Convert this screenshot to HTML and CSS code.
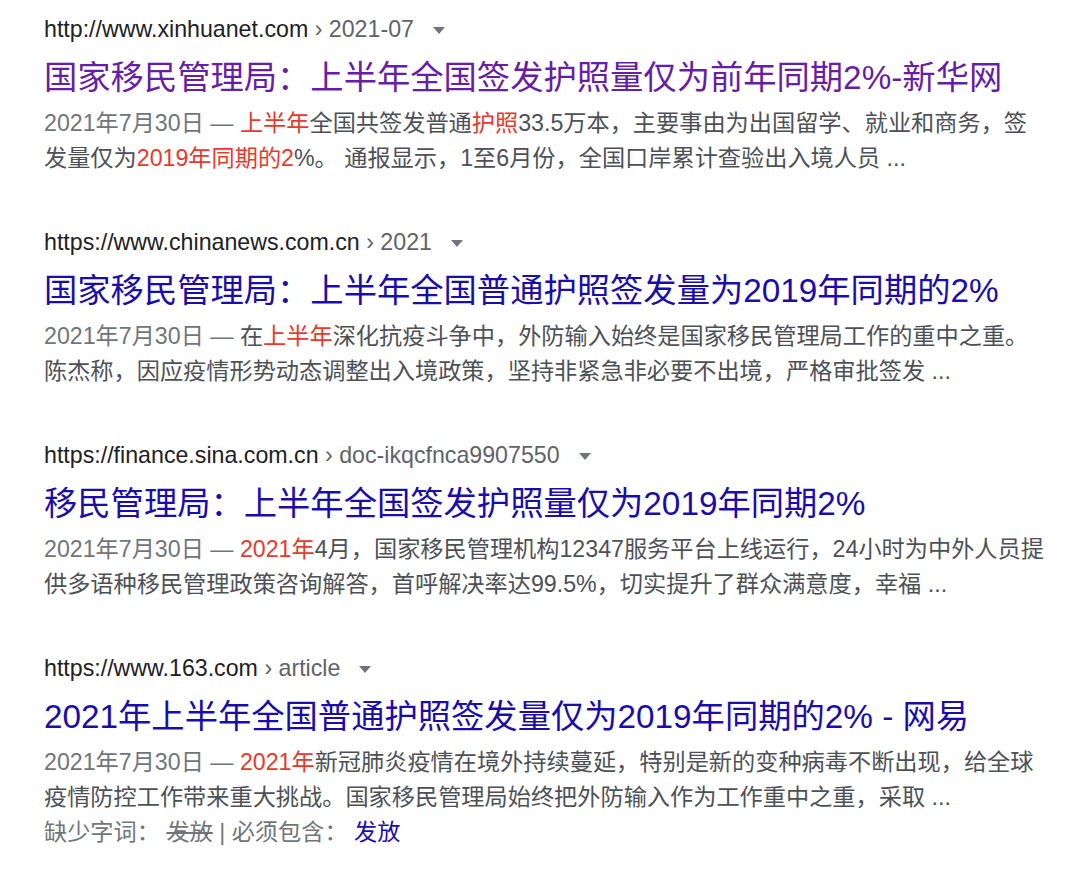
FILE: index.html
```html
<!DOCTYPE html>
<html lang="zh-CN">
<head>
<meta charset="utf-8">
<title>搜索结果</title>
<link rel="stylesheet" href="styles.css">
</head>
<body>
<main class="results">
  <div class="result">
    <div class="cite"><span class="host">http://www.xinhuanet.com</span><span class="crumb"> › 2021-07</span><span class="caret"></span></div>
    <a class="title visited" href="#">国家移民管理局：上半年全国签发护照量仅为前年同期2%-新华网</a>
    <div class="snippet"><span class="date">2021年7月30日 — </span><em>上半年</em>全国共签发普通<em>护照</em>33.5万本，主要事由为出国留学、就业和商务，签<br>发量仅为<em>2019年同期的2</em>%。 通报显示，1至6月份，全国口岸累计查验出入境人员 ...</div>
  </div>
  <div class="result">
    <div class="cite"><span class="host">https://www.chinanews.com.cn</span><span class="crumb"> › 2021</span><span class="caret"></span></div>
    <a class="title" href="#">国家移民管理局：上半年全国普通护照签发量为2019年同期的2%</a>
    <div class="snippet"><span class="date">2021年7月30日 — </span>在<em>上半年</em>深化抗疫斗争中，外防输入始终是国家移民管理局工作的重中之重。<br>陈杰称，因应疫情形势动态调整出入境政策，坚持非紧急非必要不出境，严格审批签发 ...</div>
  </div>
  <div class="result">
    <div class="cite"><span class="host">https://finance.sina.com.cn</span><span class="crumb"> › doc-ikqcfnca9907550</span><span class="caret"></span></div>
    <a class="title" href="#">移民管理局：上半年全国签发护照量仅为2019年同期2%</a>
    <div class="snippet"><span class="date">2021年7月30日 — </span><em>2021年</em>4月，国家移民管理机构12347服务平台上线运行，24小时为中外人员提<br>供多语种移民管理政策咨询解答，首呼解决率达99.5%，切实提升了群众满意度，幸福 ...</div>
  </div>
  <div class="result">
    <div class="cite"><span class="host">https://www.163.com</span><span class="crumb"> › article</span><span class="caret"></span></div>
    <a class="title" href="#">2021年上半年全国普通护照签发量仅为2019年同期的2% - 网易</a>
    <div class="snippet"><span class="date">2021年7月30日 — </span><em>2021年</em>新冠肺炎疫情在境外持续蔓延，特别是新的变种病毒不断出现，给全球<br>疫情防控工作带来重大挑战。国家移民管理局始终把外防输入作为工作重中之重，采取 ...</div>
    <div class="missing">缺少字词： <s>发放</s> | 必须包含： <a class="must" href="#">发放</a></div>
  </div>
</main>
</body>
</html>
```
FILE: styles.css
```css
html, body {
  margin: 0;
  padding: 0;
  background: #ffffff;
}
body {
  font-family: "Liberation Sans", "Noto Sans CJK SC", Arial, sans-serif;
  color: #4d5156;
}
.results {
  padding: 14px 0 0 44px;
}
.result {
  margin-bottom: 51px;
}
.cite {
  display: flex;
  align-items: center;
  font-size: 23.2px;
  line-height: 30px;
  height: 30px;
  white-space: nowrap;
}
.host {
  color: #202124;
}
.crumb {
  color: #5f6368;
  white-space: pre;
}
.caret {
  width: 0;
  height: 0;
  margin-left: 19px;
  margin-top: 2px;
  border-left: 6px solid transparent;
  border-right: 6px solid transparent;
  border-top: 7px solid #70757a;
}
.title {
  display: block;
  margin-top: 14px;
  font-size: 33.3px;
  line-height: 40px;
  color: #1a0dab;
  text-decoration: none;
  white-space: nowrap;
}
.title.visited {
  color: #681da8;
}
.snippet {
  margin-top: 8px;
  font-size: 23.2px;
  line-height: 35px;
  color: #4d5156;
  white-space: nowrap;
}
.date {
  color: #70757a;
}
.snippet em {
  font-style: normal;
  color: #e8392c;
}
.missing {
  font-size: 23.2px;
  line-height: 35px;
  color: #70757a;
  white-space: pre;
}
.missing s {
  color: #70757a;
}
.must {
  color: #1a0dab;
  text-decoration: none;
}
```
